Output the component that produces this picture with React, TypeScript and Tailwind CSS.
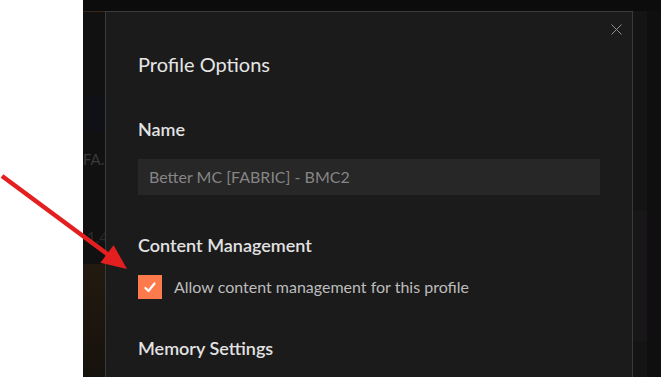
import React from 'react';

const font = { fontFamily: 'Lato, "Noto Sans", sans-serif' };

// Flecha roja de anotación que apunta al checkbox
const RedArrow: React.FC = () => (
    <svg className="absolute left-0 top-0 pointer-events-none" width="661" height="377" viewBox="0 0 661 377">
        <line x1="2" y1="176" x2="110" y2="256" stroke="#e3201f" strokeWidth="4.5" strokeLinecap="butt" />
        <polygon points="127,269 113.6,245.2 100.4,262.8" fill="#e3201f" />
    </svg>
);

export default function App() {
    return (
        <div className="relative w-[661px] h-[377px] flex overflow-hidden bg-white" style={font}>
            {/* zona blanca izquierda */}
            <div className="w-[83px] h-full bg-white flex-shrink-0" />

            {/* ventana de la app, oscura */}
            <div className="flex-1 h-full flex flex-col bg-[#121212]">
                <div className="h-[11px] w-full bg-[#0c0c0c] flex-shrink-0" />
                <div className="flex flex-1">
                    {/* franja izquierda detrás del modal */}
                    <div className="w-[22px] flex flex-col border-t border-[#3a2618] bg-[#111111] overflow-hidden">
                        <div className="h-[84px]" />
                        <div className="h-[36px] bg-[#0f1117]" />
                        <div className="mt-[18px] text-[15px] leading-[18px] text-[#3a3a3a] whitespace-nowrap">FA..</div>
                        <div className="mt-[60px] text-[15px] leading-[18px] text-[#2a2a2a] whitespace-nowrap pl-[4px]">1.4</div>
                        <div className="mt-[18px] flex-1 bg-gradient-to-b from-[#22190f] via-[#1d160e] to-[#15110c]" />
                    </div>

                    {/* modal */}
                    <div className="w-[528px] border border-b-0 border-[#3a3a3a] bg-[#1b1b1b] flex flex-col pl-[32px] pr-[32px] pt-[40px] relative">
                        <button className="absolute right-[10px] top-[11px] w-[12px] h-[12px] flex items-center justify-center">
                            <svg width="11" height="11" viewBox="0 0 11 11">
                                <path d="M0.5 0.5 L10.5 10.5 M10.5 0.5 L0.5 10.5" stroke="#8f8f8f" strokeWidth="1" />
                            </svg>
                        </button>

                        <h2 className="text-[20px] leading-[24px] text-[#e6e6e6] font-normal">Profile Options</h2>

                        <h3 className="mt-[42px] text-[18px] leading-[22px] text-[#e2e2e2] font-semibold">Name</h3>
                        <div className="mt-[19px] h-[36px] w-[462px] bg-[#272727] flex items-center px-[11px]">
                            <span className="text-[16px] text-[#858585]">Better MC [FABRIC] - BMC2</span>
                        </div>

                        <h3 className="mt-[39px] text-[18px] leading-[22px] text-[#e2e2e2] font-semibold">Content Management</h3>
                        <div className="mt-[19px] flex items-center gap-[12px] h-[24px]">
                            <div className="w-[24px] h-[24px] bg-[#fd7a4c] flex items-center justify-center">
                                <svg width="12" height="11" viewBox="0 0 12 11">
                                    <path d="M1.5 6 L4.5 9 L10.5 1.5" stroke="#ffffff" strokeWidth="2.2" fill="none" strokeLinecap="round" strokeLinejoin="round" />
                                </svg>
                            </div>
                            <span className="text-[16px] text-[#bdbdbd]">Allow content management for this profile</span>
                        </div>

                        <h3 className="mt-[38px] text-[18px] leading-[22px] text-[#e2e2e2] font-semibold">Memory Settings</h3>
                    </div>

                    {/* franja derecha */}
                    <div className="flex-1 flex">
                        <div className="w-[14px] bg-[#141414] flex flex-col">
                            <div className="h-[200px]" />
                            <div className="h-[130px] bg-[#181619]" />
                        </div>
                        <div className="flex-1 bg-[#0f0f0f]" />
                    </div>
                </div>
            </div>

            <RedArrow />
        </div>
    );
}
